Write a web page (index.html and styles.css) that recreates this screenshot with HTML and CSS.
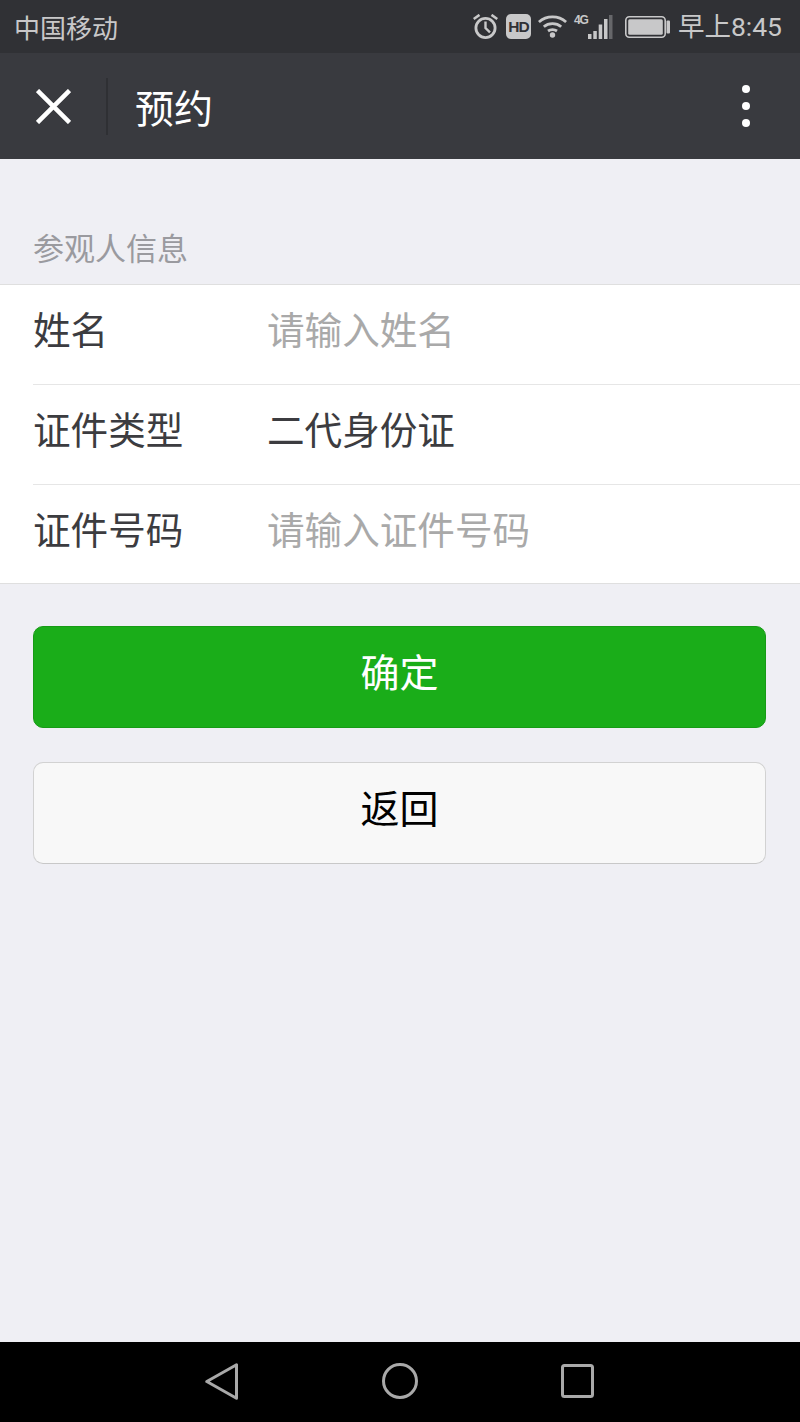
FILE: index.html
```html
<!DOCTYPE html>
<html lang="zh-CN">
<head>
<meta charset="utf-8">
<title>预约</title>
<link rel="stylesheet" href="styles.css">
</head>
<body>
<div class="screen">
  <header class="status">
    <span class="carrier">中国移动</span>
    <div class="status-right">
      <svg class="ic-alarm" width="25" height="25" viewBox="0 0 25 25" fill="none" stroke="#c8c8c9"><circle cx="12.500" cy="14" r="9.600" stroke-width="2.800"/><path d="M12.500 7.500V14l4.500 4.300" stroke-width="2.400"/><path d="M.7 5 6.500 .9M24.300 5 18.500 .9" stroke-width="2.600"/></svg>
      <span class="hd">HD</span>
      <svg class="ic-wifi" width="29" height="23" viewBox="0 0 29 23" fill="none" stroke="#c8c8c9" stroke-width="2.800"><path d="M.9 7C8.500.2 20.500.2 28.100 7"/><path d="M5.800 11.700C10.500 7.700 18.500 7.700 23.200 11.700"/><path d="M10 16C12.500 14.300 16.500 14.300 19 16"/><circle cx="14.500" cy="20" r="2.700" fill="#c8c8c9" stroke="none"/></svg>
      <div class="signal">
        <span class="net">4G</span>
        <svg width="26" height="24" viewBox="0 0 26 24" fill="#c8c8c9"><rect x="1" y="19" width="3.500" height="5"/><rect x="6.300" y="16" width="3.500" height="8"/><rect x="11.700" y="9.500" width="3.500" height="14.500"/><rect x="17" y="4" width="3.500" height="20"/><rect x="22" y="0" width="3.500" height="24" fill="#66676a"/></svg>
      </div>
      <svg class="ic-batt" width="45" height="22" viewBox="0 0 45 22"><rect x=".8" y=".8" width="39.400" height="20.400" rx="3.500" fill="none" stroke="#c8c8c9" stroke-width="1.600"/><rect x="3.200" y="3.200" width="34.600" height="15.600" rx="1.500" fill="#c8c8c9"/><rect x="41.500" y="4.500" width="3.500" height="13" rx="1" fill="#c8c8c9"/></svg>
      <span class="time">早上8:45</span>
    </div>
  </header>
  <nav class="nav">
    <svg class="close" width="35" height="35" viewBox="0 0 35 35" stroke="#fff" stroke-width="4.500"><path d="M1.500 1.500 33.500 33.500M33.500 1.500 1.500 33.500"/></svg>
    <span class="nav-sep"></span>
    <span class="nav-title">预约</span>
    <svg class="more" width="10" height="44" viewBox="0 0 10 44" fill="#fff"><circle cx="5" cy="5" r="4"/><circle cx="5" cy="22" r="4"/><circle cx="5" cy="39" r="4"/></svg>
  </nav>
  <main class="content">
    <h2 class="section-label">参观人信息</h2>
    <section class="form">
      <div class="row"><span class="label">姓名</span><span class="value placeholder">请输入姓名</span></div>
      <div class="row"><span class="label">证件类型</span><span class="value">二代身份证</span></div>
      <div class="row"><span class="label">证件号码</span><span class="value placeholder">请输入证件号码</span></div>
    </section>
    <div class="actions">
      <button class="btn btn-primary">确定</button>
      <button class="btn btn-default">返回</button>
    </div>
  </main>
  <footer class="softkeys">
    <svg class="key-back" width="33" height="37" viewBox="0 0 33 37" fill="none" stroke="#a9a9a9" stroke-width="3" stroke-linejoin="round"><path d="M1.800 18.500 31.500 1.800V35.200Z"/></svg>
    <svg class="key-home" width="36" height="36" viewBox="0 0 36 36" fill="none" stroke="#a9a9a9" stroke-width="3"><circle cx="18" cy="18" r="16.500"/></svg>
    <svg class="key-recent" width="33" height="34" viewBox="0 0 33 34" fill="none" stroke="#a9a9a9" stroke-width="3" stroke-linejoin="round"><rect x="1.500" y="1.500" width="30" height="31" rx="2"/></svg>
  </footer>
</div>
</body>
</html>
```

FILE: styles.css
```css
* { box-sizing: border-box; }
html, body { margin: 0; padding: 0; }
body {
  width: 800px;
  height: 1422px;
  overflow: hidden;
  font-family: "Noto Sans CJK SC", "Noto Sans", sans-serif;
}
.screen {
  width: 800px;
  height: 1422px;
  display: flex;
  flex-direction: column;
  background: #efeff4;
}
.status {
  height: 53px;
  flex: none;
  background: #303135;
  color: #c8c8c9;
  display: flex;
  align-items: center;
  justify-content: space-between;
  padding: 0 18px 0 14px;
}
.carrier { font-size: 26px; line-height: 53px; }
.status-right { display: flex; align-items: center; }
.ic-alarm { margin-right: 8px; }
.hd {
  width: 25px;
  height: 25px;
  margin-right: 7px;
  border-radius: 5px;
  background: #c8c8c9;
  color: #303135;
  font: bold 15.5px/25px "Liberation Sans", sans-serif;
  letter-spacing: -1px;
  text-align: center;
}
.ic-wifi { margin-right: 7px; }
.signal { position: relative; width: 39px; margin-right: 12px; display: flex; justify-content: flex-end; }
.net {
  position: absolute;
  left: 0;
  top: -1px;
  font: bold 12px/12px "Liberation Sans", sans-serif;
  letter-spacing: -1px;
}
.ic-batt { margin-right: 8px; }
.time { font-size: 26.5px; line-height: 53px; font-family: "Roboto", "Noto Sans CJK SC", sans-serif; }
.nav {
  height: 106px;
  flex: none;
  background: #393a3f;
  display: flex;
  align-items: center;
  padding-left: 36px;
  padding-right: 49px;
}
.close { flex: none; }
.nav-sep {
  width: 2px;
  height: 57px;
  margin: 0 27px 0 35px;
  background: #2f3034;
}
.nav-title { font-size: 39px; color: #fff; flex: 1; }
.content { flex: 1; }
.section-label {
  margin: 0;
  height: 125px;
  padding: 68px 0 0 33px;
  font-size: 31px;
  font-weight: normal;
  line-height: 40px;
  color: #9a9a9f;
}
.form {
  background: #fff;
  border-top: 1px solid #dfdfdf;
  border-bottom: 1px solid #dfdfdf;
  padding-left: 33px;
}
.row {
  height: 100px;
  display: flex;
  align-items: center;
  padding-bottom: 14px;
  border-top: 1px solid #e6e6e6;
}
.row:first-child { border-top: 0; height: 99px; }
.row:last-child { height: 99px; }
.label { width: 234px; font-size: 37.6px; color: #3c3c40; }
.value { font-size: 37.6px; color: #3c3c40; }
.placeholder { color: #a9a9a9; }
.actions {
  padding: 42px 34px 0 33px;
  display: flex;
  flex-direction: column;
  gap: 34px;
}
.btn {
  display: block;
  width: 100%;
  height: 102px;
  border-radius: 10px;
  font-family: inherit;
  font-size: 39px;
  padding: 0 0 14px;
}
.btn-primary { background: #1aad19; color: #fff; border: 1px solid #179b16; }
.btn-default { background: #f8f8f8; color: #000; border: 1px solid #d2d2d2; border-bottom-color: #c8c8c8; }
.softkeys {
  height: 80px;
  flex: none;
  background: #000;
  display: flex;
  align-items: center;
  padding: 0 0 2px 205px;
}
.key-back { margin-right: 144px; }
.key-home { margin-right: 143px; }
```
